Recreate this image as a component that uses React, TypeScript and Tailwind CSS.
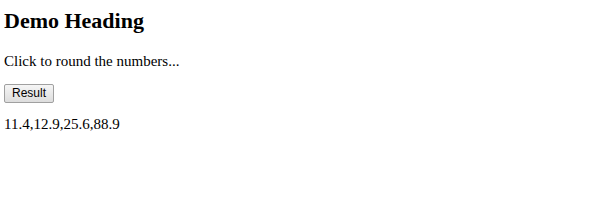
export default function App() {
  return (
    <div className="w-[600px] h-[220px] bg-white pl-[4px] pt-[8px] text-black font-['Liberation_Serif',serif]">
      <h2 className="text-[22px] leading-[25px] font-bold">Demo Heading</h2>
      <p className="mt-[20px] text-[15px] leading-[17px]">Click to round the numbers...</p>
      <button className="mt-[14px] block h-[19px] w-[50px] border border-[#a0a0a0] rounded-[2px] bg-gradient-to-b from-[#f6f6f6] to-[#dddddd] font-['Liberation_Sans',Arial,sans-serif] text-[12px] leading-[17px] text-black">
        Result
      </button>
      <p className="mt-[13px] text-[15px] leading-[17px]">11.4,12.9,25.6,88.9</p>
    </div>
  );
}
